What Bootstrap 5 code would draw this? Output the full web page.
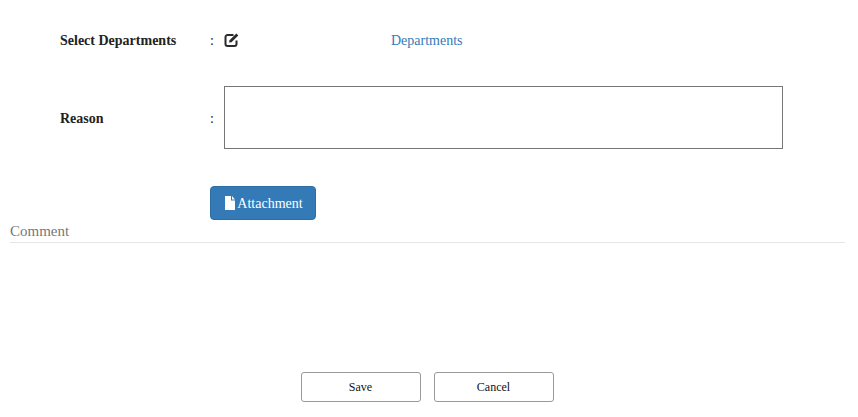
<!DOCTYPE html>
<html lang="en"><head><meta charset="utf-8"><title>Form</title>
<link href="https://cdn.jsdelivr.net/npm/bootstrap@5.3.0/dist/css/bootstrap.min.css" rel="stylesheet">
<style>
html,body{height:417px;overflow:hidden}
body{font-family:"Liberation Serif",serif;font-size:14px;color:#222;background:#fff}
.page-wrap{padding:0 12px 0 10px;height:417px}
.form-line{padding-left:50px}
.line-dept{height:80px}
.line-reason{height:63px;margin-top:6px}
.lbl{width:150px;font-weight:700;color:#222}
.line-reason .lbl,.line-reason .sep{padding-top:2px}
.sep{width:14px}
.edit-ico{margin-bottom:1px}
.dept-link{color:#337ab7;text-decoration:none;margin-left:151px}
.reason-box{width:559px;height:63px;border:1px solid #767676;border-radius:0;display:block;resize:none;outline:0}
.attach-row{margin-top:37px;padding-left:200px}
.attach-btn{background:#337ab7;border:1px solid #2e6da4;color:#fff;font-family:inherit;font-size:14px;height:34px;width:106px;padding:0 0 0 1px;border-radius:4px;gap:1px}
.attach-btn:hover{background:#337ab7;color:#fff}
.comment-head{font-size:15px;color:#777;line-height:20px;margin-top:1px;padding-bottom:1px;border-bottom:1px solid #e5e5e5;width:835px}
.actions{margin-top:129px;gap:13px;padding-right:2px}
.act-btn{width:120px;height:30px;background:#fff;border:1px solid #999;border-radius:3px;font-family:inherit;font-size:12px;color:#111;padding:0}
</style></head>
<body>
<div class="page-wrap">
<div class="form-line line-dept d-flex align-items-center">
<div class="lbl">Select Departments</div><div class="sep">:</div>
<svg class="edit-ico" width="16" height="16" viewBox="0 0 16 16" fill="none"><path d="M9.500 3H3.500A2 2 0 0 0 1.500 5v7a2 2 0 0 0 2 2h7a2 2 0 0 0 2-2V8.500" stroke="#2b2b2b" stroke-width="2"/><path d="M5.500 8.200 12.300 1.400l2 2-6.800 6.800-2.400.4z" fill="#2b2b2b"/></svg>
<a class="dept-link" href="#">Departments</a>
</div>
<div class="form-line line-reason d-flex align-items-center">
<div class="lbl">Reason</div><div class="sep">:</div>
<textarea class="reason-box" aria-label="Reason"></textarea>
</div>
<div class="attach-row">
<button class="btn attach-btn d-inline-flex align-items-center justify-content-center" type="button">
<svg width="12" height="14" viewBox="0 0 12 14" fill="#fff"><path d="M1 0h6v4.500h4V14H1z"/><path d="M8 0l3 3.500H8z"/></svg>Attachment</button>
</div>
<div class="comment-head">Comment</div>
<div class="actions d-flex justify-content-center">
<button class="act-btn" type="button">Save</button><button class="act-btn" type="button">Cancel</button>
</div>
</div>
</body></html>
